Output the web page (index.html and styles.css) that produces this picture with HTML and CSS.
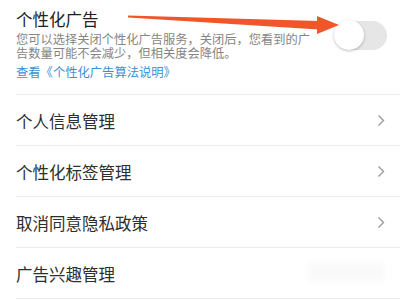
FILE: index.html
```html
<!DOCTYPE html>
<html lang="zh-CN">
<head>
<meta charset="utf-8">
<link rel="stylesheet" href="styles.css">
</head>
<body>
<div class="page">
  <div class="list">
    <div class="header">
      <div class="header-text">
        <div class="title">个性化广告</div>
        <div class="desc">您可以选择关闭个性化广告服务，关闭后，您看到的广告数量可能不会减少，但相关度会降低。</div>
        <div class="link">查看《个性化广告算法说明》</div>
      </div>
      <div class="toggle"><div class="knob"></div></div>
    </div>
    <div class="row"><span class="label">个人信息管理</span><svg class="chev" width="8" height="13" viewBox="0 0 8 13"><path d="M1.5 1.5 L6.5 6.5 L1.5 11.5" fill="none" stroke="#9a9a9a" stroke-width="1.4"/></svg></div>
    <div class="row"><span class="label">个性化标签管理</span><svg class="chev" width="8" height="13" viewBox="0 0 8 13"><path d="M1.5 1.5 L6.5 6.5 L1.5 11.5" fill="none" stroke="#9a9a9a" stroke-width="1.4"/></svg></div>
    <div class="row"><span class="label">取消同意隐私政策</span><svg class="chev" width="8" height="13" viewBox="0 0 8 13"><path d="M1.5 1.5 L6.5 6.5 L1.5 11.5" fill="none" stroke="#9a9a9a" stroke-width="1.4"/></svg></div>
    <div class="row"><span class="label">广告兴趣管理</span></div>
  </div>
  <svg class="arrow" width="400" height="60" viewBox="0 0 400 60">
    <polygon points="128,15.6 128,17.4 319,29.5 319,21" fill="#f0562a"/>
    <polygon points="317,16 339,25 317,34" fill="#f0562a"/>
  </svg>
  <div class="smudge"></div>
</div>
</body>
</html>
```

FILE: styles.css
```css
html, body {
  margin: 0;
  padding: 0;
  background: #ffffff;
}
body {
  font-family: "Noto Sans CJK SC", "Noto Sans", sans-serif;
  width: 400px;
  height: 300px;
  overflow: hidden;
}
.page {
  position: relative;
  width: 400px;
  height: 300px;
}
.list {
  margin-left: 16px;
}
.header {
  display: flex;
  justify-content: space-between;
  align-items: flex-start;
  padding: 9px 13px 14px 0;
  border-bottom: 1px solid #ececec;
}
.header-text {
  width: 300px;
}
.title {
  font-size: 16.5px;
  line-height: 20px;
  color: #222222;
}
.desc {
  margin-top: 3px;
  font-size: 12.25px;
  line-height: 14px;
  color: #858585;
}
.link {
  margin-top: 4px;
  font-size: 12.3px;
  line-height: 16px;
  color: #3b8fd5;
}
.toggle {
  position: relative;
  margin-top: 12px;
  width: 52px;
  height: 29px;
  border-radius: 15px;
  background: #e6e6e6;
}
.knob {
  position: absolute;
  left: -1px;
  top: -1px;
  width: 30px;
  height: 30px;
  border-radius: 50%;
  background: #ffffff;
  box-shadow: 0 1px 3px rgba(0,0,0,0.25);
}
.row {
  display: flex;
  align-items: center;
  justify-content: space-between;
  height: 50px;
  padding-right: 15px;
  border-bottom: 1px solid #ececec;
}
.label {
  font-size: 16.5px;
  line-height: 20px;
  color: #2e2e2e;
  padding-top: 2px;
}
.chev {
  display: block;
}
.arrow {
  position: absolute;
  left: 0;
  top: 0;
}
.smudge {
  position: absolute;
  left: 308px;
  top: 263px;
  width: 76px;
  height: 18px;
  background: rgba(0,0,0,0.022);
  filter: blur(3px);
}
```
